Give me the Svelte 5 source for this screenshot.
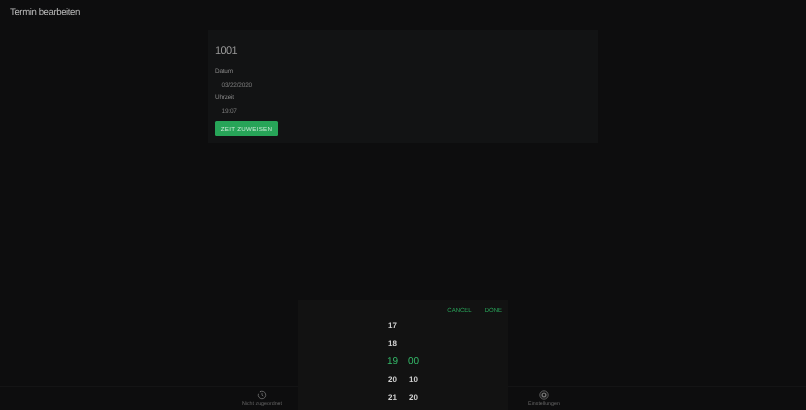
<script>
	const hours = ['17', '18', '19', '20', '21'];
	const minutes = ['', '', '00', '10', '20'];
</script>

<div class="screen">
	<div class="page">
		<header class="toolbar">Termin bearbeiten</header>

		<main class="content">
			<section class="card">
				<h2>1001</h2>
				<label for="date">Datum</label>
				<div class="value" id="date">03/22/2020</div>
				<label for="time">Uhrzeit</label>
				<div class="value" id="time">19:07</div>
				<button class="assign">ZEIT ZUWEISEN</button>
			</section>
		</main>

		<nav class="tabs">
			<div class="tab">
				<svg viewBox="0 0 24 24" width="10" height="10">
					<path d="M7 4.5A9 9 0 1 1 3.5 9" />
					<path d="M12 7v5.5l3 2" />
					<path d="M7 4.5l2.5 -1.5" />
				</svg>
				<span>Nicht zugeordnet</span>
			</div>
			<div class="tab">
				<svg viewBox="0 0 24 24" width="10" height="10">
					<circle cx="12" cy="12" r="10" />
					<circle cx="12" cy="12" r="4.5" stroke-width="3.5" />
				</svg>
				<span>Einstellungen</span>
			</div>
		</nav>
	</div>

	<div class="picker">
		<div class="actions">
			<span>CANCEL</span>
			<span>DONE</span>
		</div>
		<div class="wheels">
			<div class="wheel">
				{#each hours as h, i}
					<div class="cell" class:active={i === 2}>{h}</div>
				{/each}
			</div>
			<div class="wheel">
				{#each minutes as m, i}
					<div class="cell" class:active={i === 2}>{m}</div>
				{/each}
			</div>
		</div>
	</div>
</div>

<style>
	:global(body) {
		margin: 0;
		background: #0d0d0e;
		font-family: "Liberation Sans", Arial, sans-serif;
		text-rendering: geometricPrecision;
		overflow: hidden;
	}

	/* reference is a soft downscaled capture */
	.screen {
		position: relative;
		height: 410px;
		overflow: hidden;
		background: #0d0d0e;
		filter: blur(0.3px);
	}

	.page {
		display: flex;
		flex-direction: column;
		height: 410px;
	}

	.toolbar {
		height: 30px;
		box-sizing: border-box;
		padding: 6px 10px 0;
		font-size: 9.6px;
		letter-spacing: -0.4px;
		line-height: 13px;
		color: #b8b8b8;
	}

	.content {
		flex: 1;
		display: flex;
		justify-content: center;
	}

	.card {
		width: 390px;
		height: 113px;
		box-sizing: border-box;
		padding: 14px 7px 0;
		background: #121314;
		display: flex;
		flex-direction: column;
		align-items: flex-start;
	}

	h2 {
		margin: 0 0 9px;
		font-size: 11px;
		letter-spacing: -0.6px;
		line-height: 14px;
		font-weight: 400;
		color: #999;
	}

	label {
		font-size: 6.4px;
		letter-spacing: -0.2px;
		line-height: 10px;
		color: #888;
	}

	.value {
		padding: 5px 6.5px 3px;
		font-size: 6.5px;
		letter-spacing: -0.2px;
		line-height: 8px;
		color: #7c7c7c;
	}

	.assign {
		margin: 2px 0 0;
		width: 63px;
		height: 15px;
		padding: 0;
		border: 0;
		border-radius: 1.5px;
		background: #27a458;
		color: #c8e8d4;
		font-family: inherit;
		font-size: 6.2px;
		letter-spacing: 0.3px;
	}

	.tabs {
		height: 23px;
		border-top: 1px solid #141415;
		display: flex;
		justify-content: center;
		gap: 200px;
	}

	.tab {
		width: 82px;
		display: flex;
		flex-direction: column;
		align-items: center;
		padding-top: 3px;
		gap: 1px;
		font-size: 5.3px;
		line-height: 7px;
		color: #666;
	}

	.tab svg {
		fill: none;
		stroke: #707070;
		stroke-width: 2;
	}

	.picker {
		position: absolute;
		left: 298px;
		bottom: 0;
		width: 210px;
		height: 110px;
		background: #121212;
	}

	.actions {
		display: flex;
		justify-content: flex-end;
		gap: 13px;
		padding: 7px 6px 0 0;
		font-size: 6px;
		line-height: 9px;
		color: #2aaa5d;
	}

	.wheels {
		display: flex;
		justify-content: center;
		gap: 3px;
		margin-top: 1px;
	}

	.wheel {
		width: 18px;
	}

	.cell {
		height: 18px;
		line-height: 18px;
		text-align: center;
		font-size: 8px;
		font-weight: 700;
		color: #d0d0d0;
	}

	.cell.active {
		font-size: 10px;
		font-weight: 400;
		color: #34b868;
	}
</style>
